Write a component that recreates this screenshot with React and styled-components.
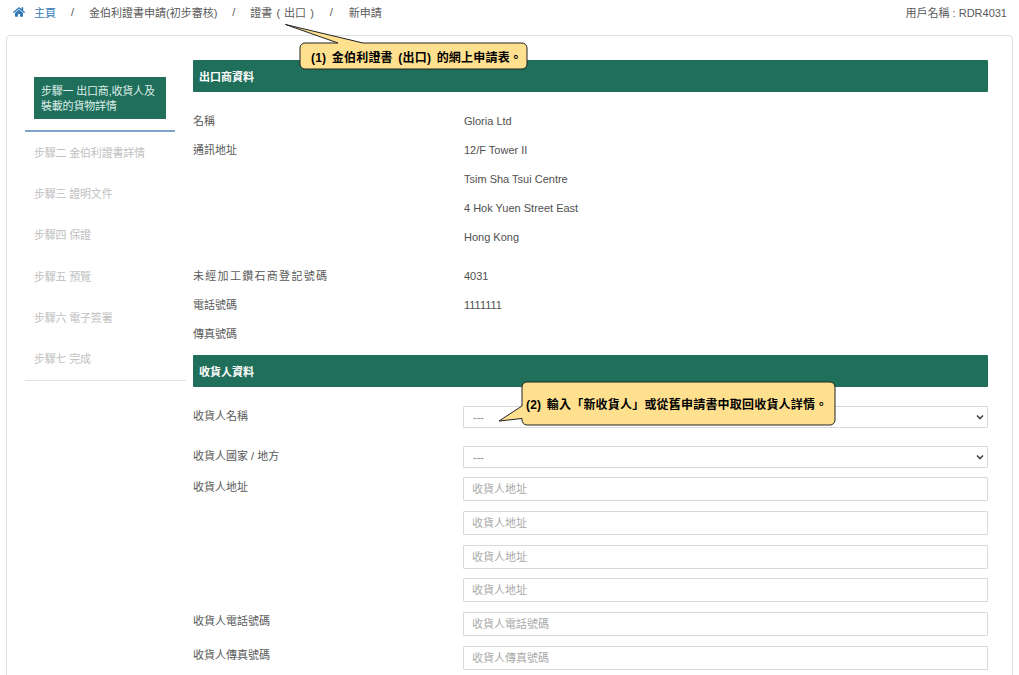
import React from 'react'
import styled, { createGlobalStyle } from 'styled-components'
import { FaHome } from 'react-icons/fa'

const GlobalStyle = createGlobalStyle`
  html, body { margin: 0; padding: 0; height: 100%; overflow: hidden; background: #fff; }
  body {
    font-family: "Liberation Sans", "Noto Sans CJK TC", sans-serif;
    font-size: 11px;
    color: #5a5a5a;
  }
`

const steps = ['步驟二 金伯利證書詳情', '步驟三 證明文件', '步驟四 保證', '步驟五 預覽', '步驟六 電子簽署', '步驟七 完成']
const exporterTop = [
  ['名稱', ['Gloria Ltd']],
  ['通訊地址', ['12/F Tower II', 'Tsim Sha Tsui Centre', '4 Hok Yuen Street East', 'Hong Kong']],
]
const exporterBottom = [
  ['未經加工鑽石商登記號碼', ['4031'], true],
  ['電話號碼', ['1111111']],
  ['傳真號碼', []],
]
const address = ['收貨人地址', '收貨人地址', '收貨人地址', '收貨人地址']
const chevron = `url("data:image/svg+xml,%3Csvg xmlns='http://www.w3.org/2000/svg' width='8' height='6' viewBox='0 0 8 6'%3E%3Cpath d='M1 1.5 L4 4.5 L7 1.5' fill='none' stroke='%23444' stroke-width='1.6'/%3E%3C/svg%3E")`

export default function App() {
  const renderInfo = (row, height) => {
    const [label, values, wide] = row
    return (
      <InfoRow key={label} $height={height}>
        <Label $wide={wide}>{label}</Label>
        <div>
          {values.map((v) => <Value key={v}>{v}</Value>)}
        </div>
      </InfoRow>
    )
  }
  return (
    <Page>
      <GlobalStyle />
      <Crumbs>
        <CrumbList>
          <HomeLink><FaHome size={12} /><span>主頁</span></HomeLink>
          <Slash $width={33}>/</Slash>
          <span>金伯利證書申請(初步審核)</span>
          <Slash $width={33}>/</Slash>
          <CrumbSpaced>證書 ( 出口 )</CrumbSpaced>
          <Slash $width={35}>/</Slash>
          <span>新申請</span>
        </CrumbList>
        <span>用戶名稱 : RDR4031</span>
      </Crumbs>
      <Card>
        <Aside>
          <ActiveWrap><ActiveStep>步驟一 出口商,收貨人及裝載的貨物詳情</ActiveStep></ActiveWrap>
          <StepList>
            {steps.map((s) => <Step key={s}>{s}</Step>)}
          </StepList>
        </Aside>
        <Main>
          <SectionHead>出口商資料</SectionHead>
          <InfoGroup $gap={14.6}>{exporterTop.map((r) => renderInfo(r, 29.2))}</InfoGroup>
          <InfoGroup $gap={9} $end={6.4}>{exporterBottom.map((r) => renderInfo(r, 29))}</InfoGroup>
          <SectionHead>收貨人資料</SectionHead>
          <FormArea>
            <FormRow $end={18}>
              <FieldLabel $top={2}>收貨人名稱</FieldLabel>
              <Select defaultValue="---"><option>---</option></Select>
            </FormRow>
            <FormRow $end={9}>
              <FieldLabel $top={2}>收貨人國家 / 地方</FieldLabel>
              <Select defaultValue="---"><option>---</option></Select>
            </FormRow>
            <FormRow $end={9.75}>
              <FieldLabel $top={2}>收貨人地址</FieldLabel>
              <Stack>
                {address.map((a, i) => <Input key={i} placeholder={a} />)}
              </Stack>
            </FormRow>
            <FormRow $end={9.75}>
              <FieldLabel $top={1}>收貨人電話號碼</FieldLabel>
              <Input placeholder="收貨人電話號碼" />
            </FormRow>
            <FormRow $end={9.75}>
              <FieldLabel $top={1}>收貨人傳真號碼</FieldLabel>
              <Input placeholder="收貨人傳真號碼" />
            </FormRow>
          </FormArea>
        </Main>
      </Card>

      <Callout $left={284} $top={24} $width={246} $height={47}>
        <svg width="246" height="47" viewBox="0 0 246 47">
          <path d="M1.5 0.5 L79 19 H238 a5 5 0 0 1 5 5 V40 a5 5 0 0 1 -5 5 H21 a5 5 0 0 1 -5 -5 V24 a5 5 0 0 1 5 -5 H54 Z" fill="#ffe08f" stroke="#222" strokeWidth="1" />
        </svg>
        <CalloutText $left={27} $top={19} $height={26}>(1) 金伯利證書 (出口) 的網上申請表。</CalloutText>
      </Callout>
      <Callout $left={496} $top={381} $width={342} $height={46}>
        <svg width="342" height="46" viewBox="0 0 342 46">
          <path d="M31 1 H334 a5 5 0 0 1 5 5 V39 a5 5 0 0 1 -5 5 H31 a5 5 0 0 1 -5 -5 V37.5 L3 40 L26 25 V6 a5 5 0 0 1 5 -5 Z" fill="#ffe08f" stroke="#222" strokeWidth="1" />
        </svg>
        <CalloutText $left={30} $top={1} $height={43}>(2) 輸入「新收貨人」或從舊申請書中取回收貨人詳情。</CalloutText>
      </Callout>
    </Page>
  )
}

const Page = styled.div`
  position: relative;
  height: 100vh;
  overflow: hidden;
`
const Crumbs = styled.div`
  height: 24px;
  padding: 0 12px 0 13px;
  display: flex;
  align-items: center;
  justify-content: space-between;
`
const CrumbList = styled.div`
  display: flex;
  align-items: center;
`
const HomeLink = styled.span`
  display: flex;
  align-items: center;
  gap: 9px;
  color: #337ab7;
`
const CrumbSpaced = styled.span`
  word-spacing: 1px;
`
const Slash = styled.span`
  width: ${(p) => p.$width}px;
  text-align: center;
`
const Card = styled.div`
  margin: 11px 6px 0;
  border: 1px solid #ddd;
  border-radius: 4px;
  display: flex;
  padding: 24px 24px 0 18px;
  gap: 7px;
`
const Aside = styled.aside`
  width: 161px;
  flex: none;
  padding-top: 17px;
`
const ActiveWrap = styled.div`
  width: 150px;
  box-sizing: border-box;
  padding: 0 9px 11px;
  border-bottom: 2px solid #7ea3cc;
`
const ActiveStep = styled.div`
  background: #1f6f5b;
  color: #dfeee9;
  height: 42px;
  box-sizing: border-box;
  padding: 7px 7px;
  line-height: 15px;
  letter-spacing: -0.2px;
`
const StepList = styled.div`
  border-bottom: 1px solid #e3e3e3;
`
const Step = styled.div`
  height: 41.3px;
  box-sizing: border-box;
  padding: 0 0 2px 9px;
  display: flex;
  align-items: center;
  color: #c0c0c0;
  letter-spacing: -0.2px;
`
const Main = styled.main`
  flex: 1;
  min-width: 0;
`
const SectionHead = styled.h3`
  margin: 0;
  height: 32px;
  padding-left: 6px;
  display: flex;
  align-items: center;
  background: #1f6f5b;
  color: #fff;
  font-size: 11px;
  font-weight: 700;
  border-radius: 1px;
`
const InfoGroup = styled.div`
  margin-top: ${(p) => p.$gap}px;
  margin-bottom: ${(p) => p.$end ?? 0}px;
`
const InfoRow = styled.div`
  display: grid;
  grid-template-columns: 271px 1fr;
  min-height: ${(p) => p.$height}px;
  line-height: ${(p) => p.$height}px;
`
const Label = styled.div`
  letter-spacing: ${(p) => (p.$wide ? '1.3px' : '0')};
`
const Value = styled.div`
  color: #505050;
`
const FormArea = styled.div`
  padding-top: 19px;
`
const FormRow = styled.div`
  display: grid;
  grid-template-columns: 270px 1fr;
  margin-bottom: ${(p) => p.$end}px;
`
const FieldLabel = styled.label`
  line-height: 16px;
  padding-top: ${(p) => p.$top}px;
`
const Stack = styled.div`
  display: flex;
  flex-direction: column;
  gap: 9.75px;
`
const Select = styled.select`
  appearance: none;
  height: 22px;
  width: 100%;
  box-sizing: border-box;
  background: #fff ${chevron} no-repeat right 3px center;
  border: 1px solid #d9d9d9;
  border-radius: 1px;
  color: #888;
  font: inherit;
  padding: 0 9px;
  outline: none;
`
const Input = styled.input`
  height: 24px;
  width: 100%;
  box-sizing: border-box;
  border: 1px solid #d9d9d9;
  border-radius: 1px;
  font: inherit;
  padding: 0 8px;
  outline: none;
  &::placeholder { color: #aaa; opacity: 1; }
`
const Callout = styled.div`
  position: absolute;
  left: ${(p) => p.$left}px;
  top: ${(p) => p.$top}px;
  width: ${(p) => p.$width}px;
  height: ${(p) => p.$height}px;
  svg { display: block; }
`
const CalloutText = styled.div`
  position: absolute;
  left: ${(p) => p.$left}px;
  top: ${(p) => p.$top}px;
  height: ${(p) => p.$height}px;
  display: flex;
  align-items: center;
  white-space: pre;
  color: #000;
  font-weight: 700;
  font-size: 12px;
  letter-spacing: 0.2px;
  word-spacing: 2px;
`
